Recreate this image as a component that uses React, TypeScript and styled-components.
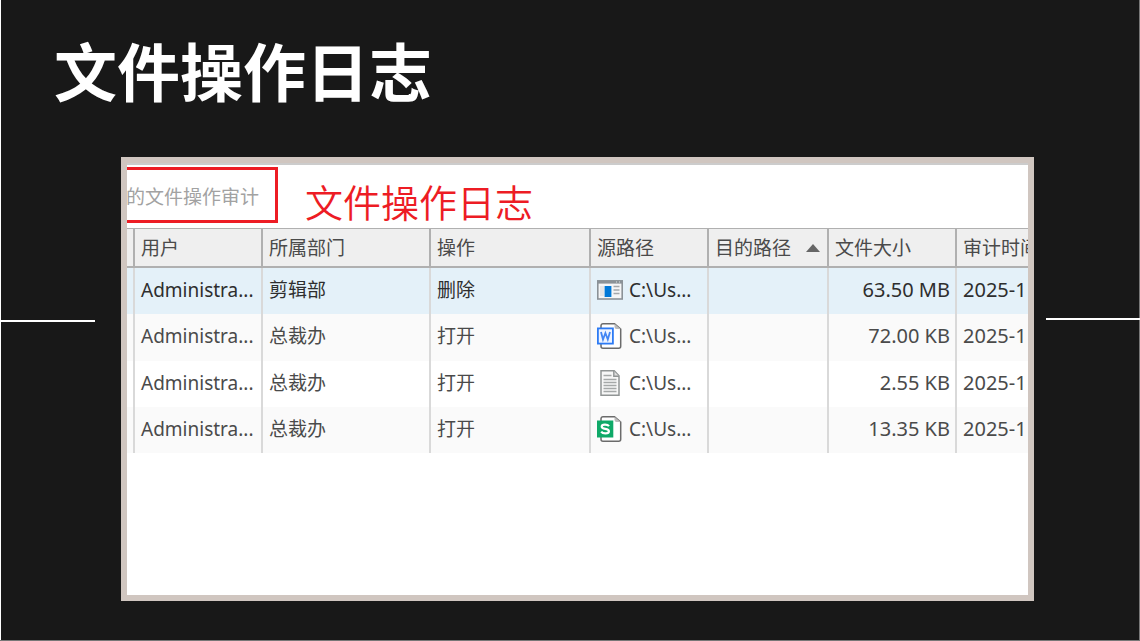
import React from "react";
import styled, { createGlobalStyle, css } from "styled-components";

const GlobalStyle = createGlobalStyle`
  *, *::before, *::after { box-sizing: border-box; }
  body { margin: 0; background: #181818; }
`;

const Slide = styled.main`
  display: flex;
  flex-direction: column;
  min-height: 100vh;
  padding: 24px 0 39px;
  border: solid #777;
  border-width: 0 1px 1px 0;
  box-shadow: inset 1px 0 #fff;
  background: #181818;
  font-family: "Noto Sans", "Noto Sans CJK SC", sans-serif;
`;

const Title = styled.h1`
  margin: 0 0 43px;
  padding-left: 54px;
  color: #fff;
  font: bold 63px/90px "Noto Sans CJK SC", sans-serif;
`;

const Stage = styled.div`
  display: flex;
  flex: 1;
  align-items: flex-start;
  margin-right: -1px;
`;

const Rule = styled.span<{ $side: "left" | "right" }>`
  height: 2px;
  background: #fff;
  ${({ $side }) =>
    $side === "left"
      ? css`
          flex: 0 0 95px;
          margin: 163px 26px 0 0;
        `
      : css`
          flex: 0 0 94px;
          margin: 161px 0 0 12px;
        `}
`;

const Frame = styled.section`
  display: flex;
  flex: 1;
  flex-direction: column;
  align-self: stretch;
  min-width: 0;
  overflow: hidden;
  border: 6px solid #d0c6c0;
  background: #fff;
`;

const Caption = styled.header`
  display: flex;
  align-items: flex-start;
  gap: 27px;
  height: 65px;
  padding-top: 2px;
  border-top: 2px solid #ccc;
`;

const AuditTab = styled.div`
  display: flex;
  justify-content: flex-end;
  width: 151px;
  height: 56px;
  padding-right: 16px;
  overflow: hidden;
  border: 3px solid #ed1c24;
  border-left: 0;
  color: #a2a2a2;
  font: 400 19px/52px "Noto Sans CJK SC", sans-serif;
  white-space: nowrap;
`;

const CaptionText = styled.h2`
  margin: 0;
  padding-top: 6px;
  color: #ed1c24;
  font: 350 38px/56px "Noto Sans CJK SC", sans-serif;
  white-space: nowrap;
`;

const Table = styled.table`
  width: 100%;
  height: 225px;
  border-collapse: separate;
  border-spacing: 0;
  table-layout: fixed;
  color: #4a4a4a;
  font-size: 19px;
  line-height: 28px;
`;

const HeadCell = styled.th`
  height: 40px;
  padding: 0 0 0 6px;
  overflow: hidden;
  border: solid #b0b0b0;
  border-width: 1px 2px 2px 0;
  background: #efefef;
  font-weight: 400;
  text-align: left;
  white-space: nowrap;

  &:last-child { border-right: 0; }
`;

const HeadLabel = styled.span`
  display: flex;
  align-items: center;
  gap: 15px;
`;

const Row = styled.tr<{ $selected?: boolean }>`
  background: #fff;
  &:nth-child(even) { background: #fafafa; }
  ${({ $selected }) =>
    $selected &&
    css`
      background: #e4f1f9;
      color: #2e2e2e;
    `}
`;

const Cell = styled.td<{ $numeric?: boolean; $end?: boolean }>`
  padding: 0 5px 2px 6px;
  overflow: hidden;
  border-right: 2px solid #d9d9d9;
  font-size: ${({ $numeric }) => ($numeric ? 20 : 19)}px;
  text-align: ${({ $end }) => ($end ? "right" : "left")};
  white-space: nowrap;

  &:last-child {
    padding-right: 0;
    border-right: 0;
  }
`;

const PathLabel = styled.span`
  display: flex;
  align-items: center;
  gap: 6px;
`;

const Icon = styled.svg`
  flex: none;
  width: 26px;
  height: 26px;
`;

const Arrow = styled.svg`
  width: 14px;
  height: 8px;
`;

type FileKind = "exe" | "doc" | "txt" | "xls";

function FileIcon({ kind }: { kind: FileKind }) {
  if (kind === "exe") {
    return (
      <Icon viewBox="0 0 26 26" aria-hidden="true">
        <rect x="0.8" y="4" width="24.4" height="18" fill="#f4f5f6" stroke="#8b9297" strokeWidth="1.6" />
        <path d="M0 3.2h26v3.4H0z" fill="#8b9297" />
        <path d="M19 5h1M22 5h1" stroke="#dce1e4" strokeWidth="1.2" />
        <path d="M3 9h4v10H3z" fill="#e4e5e6" />
        <path d="M7.6 9h6.8v11H7.6z" fill="#0078d7" />
        <path d="M16.5 9.5h6M16.5 13h6M16.5 16.5h6" stroke="#a3a7aa" strokeWidth="1.4" />
      </Icon>
    );
  }
  if (kind === "txt") {
    return (
      <Icon viewBox="0 0 26 26" aria-hidden="true">
        <path d="M4 .8h13.2L22 5.8v19.4H4z" fill="#f7f7f7" stroke="#919595" strokeWidth="1.5" />
        <path d="M16.8 1v5.2H22" fill="#ddd" stroke="#919595" strokeWidth="1.4" />
        <path d="M6.5 5.5h8M6.5 9.5h13M6.5 12.5h13M6.5 15.5h13M6.5 18.5h13M6.5 21.5h13" stroke="#a5a8a8" strokeWidth="1.4" />
      </Icon>
    );
  }
  const word = kind === "doc";
  return (
    <Icon viewBox="0 0 26 26" aria-hidden="true">
      <path d="M6 .8h11.5L23.7 6v17.2a2 2 0 0 1-2 2H6a2 2 0 0 1-2-2V2.8a2 2 0 0 1 2-2z" fill="#fff" stroke="#6b6b6b" strokeWidth="1.5" />
      <path d="M17.5.8 23.7 6h-4.2a2 2 0 0 1-2-2z" fill="#bbb" />
      {word ? (
        <>
          <rect x="0.9" y="5.4" width="15" height="15.2" fill="#eef4ff" stroke="#2d7bf4" strokeWidth="1.8" />
          <path d="m4 9 2 7.5L8.4 10l2.4 6.5L13 9" fill="none" stroke="#4285f4" strokeWidth="1.8" />
        </>
      ) : (
        <>
          <path d="M0 4.5h16.3v17H0z" fill="#0fa968" />
          <path d="M12 10.2C10.5 8.2 4.7 8 4.7 10.8c0 3 7.2 1.3 7.2 4.4 0 3-6.2 2.8-7.7.5" fill="none" stroke="#fff" strokeWidth="2.2" />
        </>
      )}
    </Icon>
  );
}

const columnWidths = [8, 128, 168, 160, 118, 120, 128];
const headings = ["用户", "所属部门", "操作", "源路径", "目的路径", "文件大小", "审计时间"];

const rows: { dept: string; action: string; kind: FileKind; size: string }[] = [
  { dept: "剪辑部", action: "删除", kind: "exe", size: "63.50 MB" },
  { dept: "总裁办", action: "打开", kind: "doc", size: "72.00 KB" },
  { dept: "总裁办", action: "打开", kind: "txt", size: "2.55 KB" },
  { dept: "总裁办", action: "打开", kind: "xls", size: "13.35 KB" },
];

export default function App() {
  return (
    <Slide>
      <GlobalStyle />
      <Title>文件操作日志</Title>
      <Stage>
        <Rule $side="left" />
        <Frame>
          <Caption>
            <AuditTab>的文件操作审计</AuditTab>
            <CaptionText>文件操作日志</CaptionText>
          </Caption>
          <Table>
            <colgroup>
              {columnWidths.map((width, i) => (
                <col key={i} width={width} />
              ))}
              <col />
            </colgroup>
            <thead>
              <tr>
                <HeadCell />
                {headings.map((text) => (
                  <HeadCell key={text} scope="col">
                    <HeadLabel>
                      {text}
                      {text === "目的路径" && (
                        <Arrow viewBox="0 0 14 8" aria-hidden="true">
                          <path d="M7 0l7 8H0z" fill="#666" />
                        </Arrow>
                      )}
                    </HeadLabel>
                  </HeadCell>
                ))}
              </tr>
            </thead>
            <tbody>
              {rows.map((row, i) => (
                <Row key={row.kind} $selected={i === 0}>
                  <Cell />
                  <Cell>Administra...</Cell>
                  <Cell>{row.dept}</Cell>
                  <Cell>{row.action}</Cell>
                  <Cell>
                    <PathLabel>
                      <FileIcon kind={row.kind} />
                      C:\Us...
                    </PathLabel>
                  </Cell>
                  <Cell />
                  <Cell $numeric $end>{row.size}</Cell>
                  <Cell $numeric>2025-1</Cell>
                </Row>
              ))}
            </tbody>
          </Table>
        </Frame>
        <Rule $side="right" />
      </Stage>
    </Slide>
  );
}
